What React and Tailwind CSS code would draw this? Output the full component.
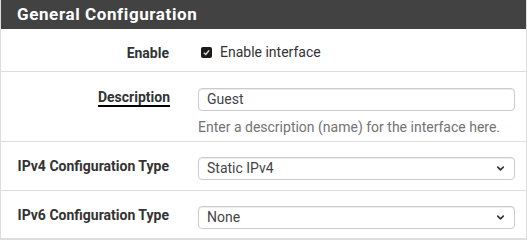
import { ChevronDown } from "lucide-react";

function Select({ value }) {
  return (
    <div className="flex h-[23px] items-center justify-between rounded-[4px] border border-[#ccc] px-[8px] text-[14px] text-[#444] shadow-[inset_0_1px_1px_rgba(0,0,0,0.075)]">
      <span>{value}</span>
      <ChevronDown size={11} strokeWidth={3.5} className="text-[#333]" />
    </div>
  );
}

export default function App() {
  return (
    <div className="w-[527px] h-[240px] bg-white font-['Roboto',sans-serif]">
      <div className="border border-[#ddd] border-t-0">
        <div className="h-[29px] bg-[#424242] pl-[16px] text-[17px] font-bold leading-[29px] tracking-[0.6px] text-white">
          General Configuration
        </div>
        <div className="flex border-b border-[#ddd] h-[43px]">
          <div className="w-[183px] shrink-0 pr-[15px] pt-[14px] text-right text-[14px] font-bold text-[#333]">
            Enable
          </div>
          <div className="flex items-center gap-[8px] pl-[17px] pt-[4px] text-[14px] text-[#333]">
            <span className="flex h-[11px] w-[11px] items-center justify-center rounded-[2px] bg-[#1a1a1a]">
              <svg width="7" height="7" viewBox="0 0 8 8">
                <path d="M1 4.2 L3.2 6.3 L7 1.5" stroke="#ddd" strokeWidth="1.6" fill="none" />
              </svg>
            </span>
            Enable interface
          </div>
        </div>
        <div className="flex border-b border-[#ddd] h-[70px]">
          <div className="w-[183px] shrink-0 pr-[14px] pt-[15px] text-right text-[14px] font-bold text-[#333]">
            <span className="border-b-2 border-black">Description</span>
          </div>
          <div className="flex-1 pl-[14px] pr-[11px] pt-[16px]">
            <div className="flex h-[23px] items-center rounded-[4px] border border-[#ccc] px-[8px] text-[14px] text-[#444] shadow-[inset_0_1px_1px_rgba(0,0,0,0.075)]">
              Guest
            </div>
            <div className="mt-[6px] text-[14px] text-[#737373]">
              Enter a description (name) for the interface here.
            </div>
          </div>
        </div>
        <div className="flex border-b border-[#ddd] h-[49px]">
          <div className="w-[183px] shrink-0 pr-[15px] pt-[14px] text-right text-[14px] font-bold text-[#333]">
            IPv4 Configuration Type
          </div>
          <div className="flex-1 pl-[14px] pr-[11px] pt-[15px]">
            <Select value="Static IPv4" />
          </div>
        </div>
        <div className="flex border-b border-[#ddd] h-[48px]">
          <div className="w-[183px] shrink-0 pr-[15px] pt-[14px] text-right text-[14px] font-bold text-[#333]">
            IPv6 Configuration Type
          </div>
          <div className="flex-1 pl-[14px] pr-[11px] pt-[15px]">
            <Select value="None" />
          </div>
        </div>
      </div>
    </div>
  );
}
